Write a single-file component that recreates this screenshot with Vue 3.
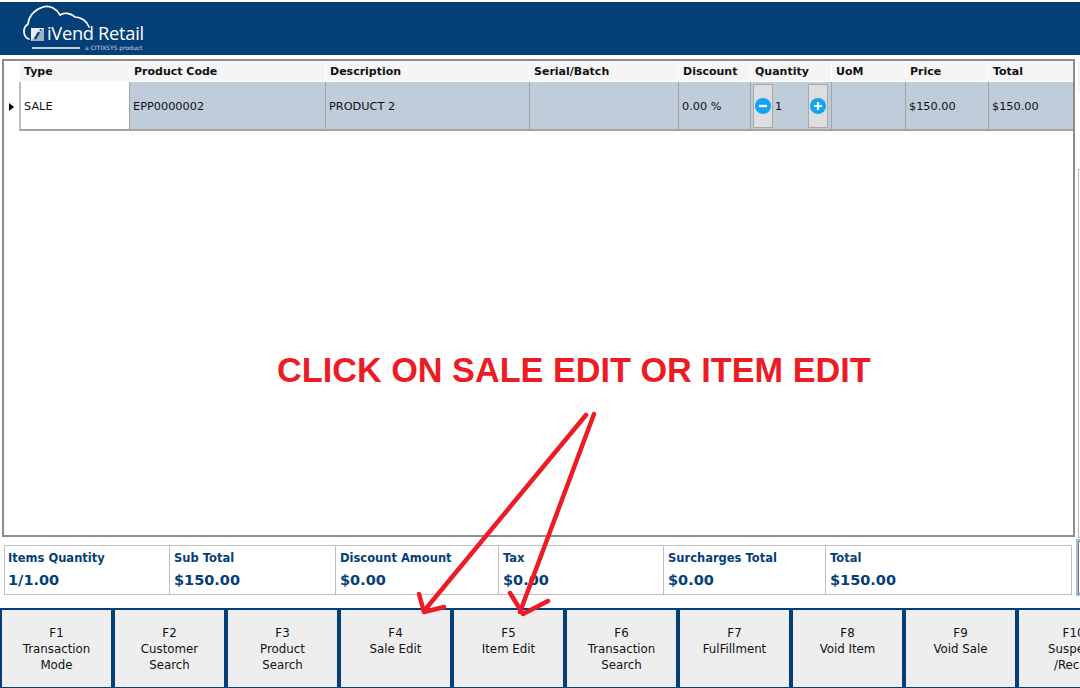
<script setup>
const columns = ['Type', 'Product Code', 'Description', 'Serial/Batch', 'Discount', 'Quantity', 'UoM', 'Price', 'Total']
const totals = [
  { label: 'Items Quantity', value: '1/1.00', width: 165 },
  { label: 'Sub Total', value: '$150.00', width: 166 },
  { label: 'Discount Amount', value: '$0.00', width: 163 },
  { label: 'Tax', value: '$0.00', width: 165 },
  { label: 'Surcharges Total', value: '$0.00', width: 162 },
  { label: 'Total', value: '$150.00', width: 245 }
]
const keys = [
  ['F1', 'Transaction', 'Mode'],
  ['F2', 'Customer', 'Search'],
  ['F3', 'Product', 'Search'],
  ['F4', 'Sale Edit'],
  ['F5', 'Item Edit'],
  ['F6', 'Transaction', 'Search'],
  ['F7', 'FulFillment'],
  ['F8', 'Void Item'],
  ['F9', 'Void Sale'],
  ['F10', 'Suspend', '/Recall']
]
</script>

<template>
  <div class="screen">
    <header class="topbar">
      <div class="logo">
        <svg class="logo-art" width="130" height="53" viewBox="0 0 130 53">
          <path d="M10 37 C4 35 3 26 9 22 C10 14 15 8 24 5 C31 3 38 7 41 13 C45 10 52 11 56 15 C62 15 68 19 70 25" fill="none" stroke="#fff" stroke-width="1.7" stroke-linecap="round"/>
          <rect x="12" y="26" width="13" height="13" fill="#e9eef3"/>
          <path d="M25 26 V39 H12 Z" fill="#9fb0c2"/>
          <path d="M16 37 L20 30" stroke="#053f77" stroke-width="2.4"/>
          <circle cx="21.5" cy="28" r="1.1" fill="#053f77"/>
          <path d="M13 46 H61" stroke="#fff" stroke-width="1.3"/>
        </svg>
        <span class="logo-name">iVend Retail</span>
        <span class="logo-tag">a CITIXSYS product</span>
      </div>
    </header>

    <div class="work">
      <section class="grid-frame">
        <div class="grid-row grid-head">
          <div class="marker"></div>
          <div v-for="c in columns" :key="c" class="head-cell">{{ c }}</div>
        </div>
        <div class="grid-row grid-data">
          <div class="marker"><span class="caret"></span></div>
          <div class="cell cell-type">SALE</div>
          <div class="cell">EPP0000002</div>
          <div class="cell">PRODUCT 2</div>
          <div class="cell"></div>
          <div class="cell">0.00 %</div>
          <div class="cell cell-qty">
            <button class="step">
              <svg width="16" height="16" viewBox="0 0 16 16"><circle cx="8" cy="8" r="8" fill="#0ea5f5"/><path d="M4 8 H12" stroke="#fff" stroke-width="2.4"/></svg>
            </button>
            <span class="qty">1</span>
            <button class="step">
              <svg width="16" height="16" viewBox="0 0 16 16"><circle cx="8" cy="8" r="8" fill="#0ea5f5"/><path d="M4 8 H12 M8 4 V12" stroke="#fff" stroke-width="2.2"/></svg>
            </button>
          </div>
          <div class="cell"></div>
          <div class="cell">$150.00</div>
          <div class="cell">$150.00</div>
        </div>
      </section>
      <aside class="side-top">
        <div class="side-tab"></div>
        <div class="side-panel"></div>
      </aside>
    </div>

    <div class="summary-line">
      <section class="summary">
        <div v-for="t in totals" :key="t.label" class="sum-cell" :style="{ width: t.width + 'px' }">
          <div class="sum-label">{{ t.label }}</div>
          <div class="sum-value">{{ t.value }}</div>
        </div>
      </section>
      <div class="side-box"></div>
    </div>

    <nav class="keys">
      <button v-for="k in keys" :key="k[0]" class="key">
        <span v-for="line in k" :key="line">{{ line }}</span>
      </button>
    </nav>

    <div class="note">CLICK ON SALE EDIT OR ITEM EDIT</div>
    <svg class="arrows" width="1080" height="688" viewBox="0 0 1080 688">
      <g fill="none" stroke="#ed1c24" stroke-width="4.5" stroke-linecap="round" stroke-linejoin="round">
        <path d="M586 415 L424 611"/>
        <path d="M419 594 L424 612 L444 607"/>
        <path d="M594 414 L520 612"/>
        <path d="M510 593 L523 614 L548 601"/>
      </g>
    </svg>
  </div>
</template>

<style scoped>
.screen {
  position: relative;
  width: 1080px;
  height: 688px;
  overflow: hidden;
  background: #fff;
  font-family: "DejaVu Sans", sans-serif;
  font-size: 11.3px;
  color: #111;
}
.topbar {
  margin-top: 2px;
  height: 53px;
  background: #053f77;
  position: absolute;
  top: 0;
  left: 0;
  right: 0;
}
.logo {
  position: relative;
  width: 150px;
  height: 53px;
  margin-left: 19px;
}
.logo-art {
  position: absolute;
  left: 0;
  top: 0;
}
.logo-name {
  position: absolute;
  left: 28px;
  top: 19px;
  font-family: "Open Sans", sans-serif;
  font-size: 18.3px;
  letter-spacing: -0.3px;
  line-height: 24px;
  color: #fff;
  white-space: nowrap;
}
.logo-tag {
  position: absolute;
  left: 66px;
  top: 43px;
  font-size: 6px;
  line-height: 6px;
  color: #cfdbe6;
  white-space: nowrap;
}
.work {
  display: flex;
  height: 478px;
  padding: 59px 0 0 2px;
  box-sizing: content-box;
}
.grid-frame {
  width: 1069px;
  height: 474px;
  border: 2px solid #8c8c8c;
  flex: none;
}
.grid-row {
  display: grid;
  grid-template-columns: 15px 110px 196px 204px 149px 72px 81px 74px 83px 85px;
}
.grid-head {
  height: 20px;
  background: #f5f5f5;
  border-bottom: 1px solid #fff;
  font-weight: 700;
  font-size: 11px;
}
.head-cell {
  padding-left: 4px;
  line-height: 21px;
  border-left: 1px solid #fff;
  white-space: nowrap;
}
.grid-data {
  height: 49px;
}
.marker {
  display: flex;
  align-items: center;
  padding-left: 5px;
  background: #fff;
}
.caret {
  width: 0;
  height: 0;
  border-left: 5px solid #000;
  border-top: 4px solid transparent;
  border-bottom: 4px solid transparent;
}
.cell {
  display: flex;
  align-items: center;
  box-sizing: border-box;
  padding: 2px 0 0 3px;
  background: #bfccd9;
  border-left: 1px solid #a3a3a3;
  border-bottom: 2px solid #a3a3a3;
  white-space: nowrap;
}
.cell-type {
  background: #fff;
  border-left: 2px solid #bdbdbd;
  padding-left: 3px;
}
.cell-qty {
  padding: 0 0 0 2px;
}
.step {
  width: 20px;
  height: 44px;
  padding: 0;
  display: flex;
  align-items: center;
  justify-content: center;
  background: #dedede;
  border: 1px solid #a8a8a8;
  flex: none;
}
.qty {
  width: 33px;
  padding: 2px 0 0 2px;
  flex: none;
}
.side-top {
  margin-left: 3px;
  flex: none;
}
.side-tab {
  width: 6px;
  height: 32px;
  margin-top: 1px;
  background: #f5f5f5;
}
.side-panel {
  width: 6px;
  height: 367px;
  margin-top: 77px;
  border: 1px solid #b5b5b5;
  border-right: 0;
}
.summary-line {
  display: flex;
  align-items: flex-start;
  height: 71px;
  padding: 8px 0 0 4px;
  box-sizing: border-box;
}
.summary {
  display: flex;
  width: 1068px;
  height: 50px;
  box-sizing: border-box;
  border: 1px solid #c0c0c0;
  flex: none;
}
.sum-cell {
  box-sizing: border-box;
  padding: 3px 0 0 4px;
  border-right: 1px solid #c0c0c0;
  color: #053f77;
  font-weight: 700;
  flex: none;
}
.sum-cell:first-child {
  padding-left: 3px;
}
.sum-cell:last-child {
  border-right: 0;
  flex: 1;
  width: auto;
}
.sum-label {
  font-size: 11.5px;
  line-height: 18px;
  white-space: nowrap;
}
.sum-value {
  font-size: 14.5px;
  line-height: 26px;
  white-space: nowrap;
}
.side-box {
  width: 10px;
  height: 57px;
  margin-left: 4px;
  margin-top: -6px;
  box-sizing: border-box;
  border: 2px solid #a9bbd6;
  border-right: 0;
  box-shadow: inset 1px 1px 0 #707a88, inset 0 -1px 0 #707a88;
  flex: none;
}
.keys {
  position: absolute;
  left: 0;
  top: 608px;
  display: flex;
  gap: 4px;
  width: 1200px;
  height: 80px;
  box-sizing: border-box;
  background: #053f77;
  padding: 2px 0 1px 2px;
}
.key {
  width: 109px;
  flex: none;
  display: flex;
  flex-direction: column;
  align-items: center;
  padding: 15px 0 0;
  border: 0;
  background: #eeeeee;
  font: inherit;
  font-size: 11.8px;
  line-height: 16px;
  color: #111;
}
.note {
  position: absolute;
  left: 277px;
  top: 350px;
  font-family: "Liberation Sans", Arial, sans-serif;
  font-weight: 700;
  font-size: 34.25px;
  line-height: 40px;
  color: #ed1c24;
  white-space: nowrap;
}
.arrows {
  position: absolute;
  left: 0;
  top: 0;
  pointer-events: none;
}
</style>
